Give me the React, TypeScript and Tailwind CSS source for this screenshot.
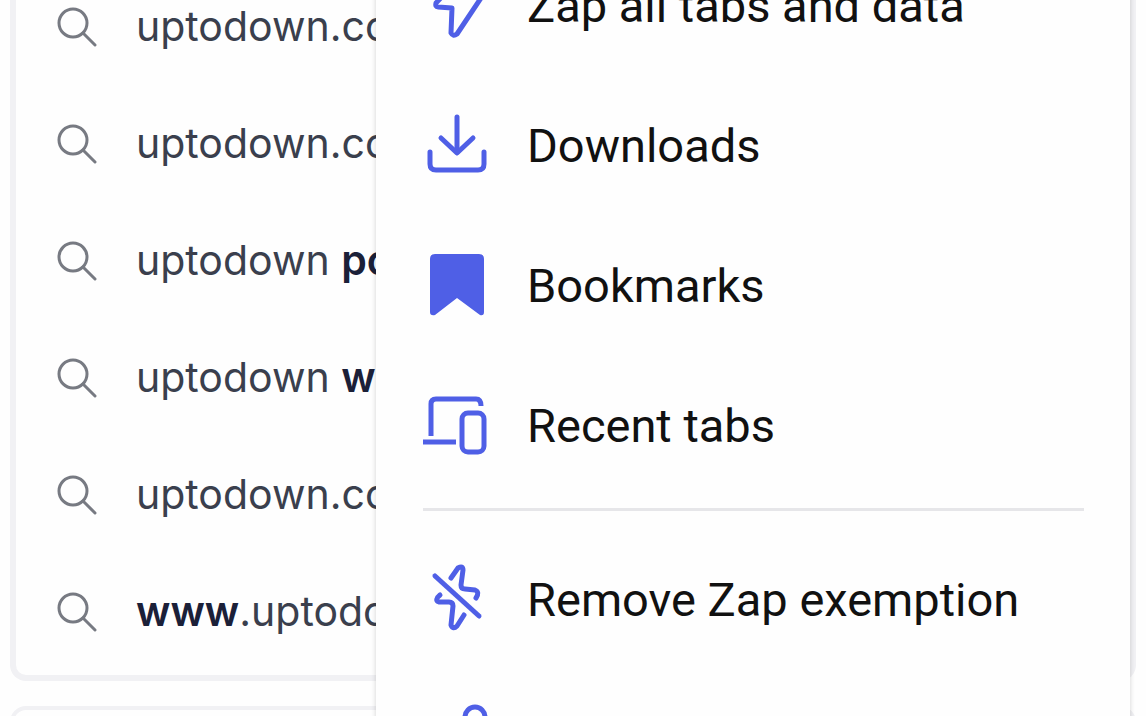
import React from 'react';

interface IconProps {
  className?: string;
}

const SearchIcon: React.FC<IconProps> = ({ className }) => (
  <svg viewBox="0 0 40 40" className={className} fill="none" stroke="currentColor" strokeWidth="3" strokeLinecap="round" aria-hidden="true">
    <circle cx="16" cy="16" r="14" />
    <path d="M26 26 L38 38" />
  </svg>
);

const ZapIcon: React.FC<IconProps> = ({ className }) => (
  <svg viewBox="0 0 72 72" className={className} fill="none" stroke="currentColor" strokeWidth="5" strokeLinejoin="round" strokeLinecap="round" aria-hidden="true">
    <path d="M43 4 L15 34 Q14 38 17 38 L31 39 L30 64 Q32 68 36 65 L60 29 L60 26 L43 26 Z" />
  </svg>
);

const DownloadIcon: React.FC<IconProps> = ({ className }) => (
  <svg viewBox="0 0 72 72" className={className} fill="none" stroke="currentColor" strokeWidth="5" strokeLinejoin="round" strokeLinecap="round" aria-hidden="true">
    <path d="M36 8 L36 43" />
    <path d="M20 29 L36 44 L52 29" />
    <path d="M9 43 L9 55 Q9 61 15 61 L57 61 Q63 61 63 55 L63 43" />
  </svg>
);

const BookmarkIcon: React.FC<IconProps> = ({ className }) => (
  <svg viewBox="0 0 72 72" className={className} fill="currentColor" aria-hidden="true">
    <path d="M14 5 H58 Q63 5 63 10 V63 Q63 67 59 66 L36 49 L14 66 Q9 67 9 63 V10 Q9 5 14 5 Z" />
  </svg>
);

const DevicesIcon: React.FC<IconProps> = ({ className }) => (
  <svg viewBox="0 0 72 72" className={className} fill="none" stroke="currentColor" strokeWidth="5" aria-hidden="true">
    <path d="M10 47 V15 Q10 10 15 10 H55 Q60 10 60 17" />
    <path d="M2 53 H35" />
    <rect x="41" y="24" width="22" height="39" rx="6" />
  </svg>
);

const ZapOffIcon: React.FC<IconProps> = ({ className }) => (
  <svg viewBox="0 0 72 72" className={className} fill="none" stroke="currentColor" strokeWidth="5" strokeLinejoin="round" strokeLinecap="round" aria-hidden="true">
    <path d="M30 15 L37 5 Q42 2 42 7 L40 22 Q40 26 44 26 L54 27 Q59 29 55 35" />
    <path d="M19 32 Q13 37 18 39 L28 39 Q32 39 32 43 L30 62 Q32 67 36 63 L43 52" />
    <path d="M14 13 L58 53" />
  </svg>
);

const ShareIcon: React.FC<IconProps> = ({ className }) => (
  <svg viewBox="0 0 72 72" className={className} fill="none" stroke="currentColor" strokeWidth="5" strokeLinecap="round" aria-hidden="true">
    <circle cx="54" cy="14" r="10" />
    <circle cx="16" cy="36" r="9" />
    <circle cx="54" cy="58" r="9" />
    <path d="M24 31 L45 19 M24 41 L46 53" />
  </svg>
);

interface Suggestion {
  lead?: string;
  text: string;
  tail?: string;
}

const SUGGESTIONS: Suggestion[] = [
  { text: 'uptodown.com' },
  { text: 'uptodown.com' },
  { text: 'uptodown ', tail: 'pc' },
  { text: 'uptodown ', tail: 'windows' },
  { text: 'uptodown.com' },
  { lead: 'www', text: '.uptodown.com' },
];

interface MenuEntry {
  label: string;
  Icon: React.FC<IconProps>;
}

const MAIN_ITEMS: MenuEntry[] = [
  { label: 'Zap all tabs and data', Icon: ZapIcon },
  { label: 'Downloads', Icon: DownloadIcon },
  { label: 'Bookmarks', Icon: BookmarkIcon },
  { label: 'Recent tabs', Icon: DevicesIcon },
];

const PAGE_ITEMS: MenuEntry[] = [
  { label: 'Remove Zap exemption', Icon: ZapOffIcon },
  { label: 'Share', Icon: ShareIcon },
];

const MenuRow: React.FC<MenuEntry> = ({ label, Icon }) => (
  <button type="button" role="menuitem" className="flex h-[140px] w-full items-center gap-[34px] pl-[45px] text-left text-[47px] leading-none text-[#111]">
    <Icon className="size-[72px] shrink-0 text-[#4f5fe6]" />
    <span className="whitespace-nowrap">{label}</span>
  </button>
);

export default function App() {
  return (
    <main className="relative h-screen overflow-hidden bg-[#fefefe]">
      {/* Search suggestions */}
      <section className="-mt-[32px] mx-[10px] overflow-hidden rounded-b-2xl border-x-[6px] border-b-[6px] border-[#f1f1f4] bg-[#fefefe] pb-[5px] font-['Inter',sans-serif]">
        <ul>
          {SUGGESTIONS.map((s, idx) => (
            <li key={idx}>
              <a href="#" className="flex h-[117px] items-center gap-[39px] pl-[41px] text-[41px] leading-none text-[#3a3f4d]">
                <SearchIcon className="size-10 shrink-0 text-[#777a82]" />
                <span className="whitespace-nowrap">
                  {s.lead && <b className="font-semibold text-[#1b2038]">{s.lead}</b>}
                  {s.text}
                  {s.tail && <b className="font-semibold text-[#1b2038]">{s.tail}</b>}
                </span>
              </a>
            </li>
          ))}
        </ul>
      </section>
      <section className="mx-[10px] mt-[25px] h-24 rounded-t-2xl border-4 border-[#f1f1f4]" />

      {/* Browser menu, open over the suggestions */}
      <div role="menu" className="absolute -top-[65px] left-[376px] right-[16px] bg-[#fefefe] font-['Roboto',sans-serif] shadow-[0_0_5px_rgba(0,0,0,0.18)]">
        {MAIN_ITEMS.map((item) => (
          <MenuRow key={item.label} {...item} />
        ))}
        <hr className="mb-[18px] ml-[47px] mr-[46px] mt-[13px] border-t-[3px] border-[#e6e6e9]" />
        {PAGE_ITEMS.map((item) => (
          <MenuRow key={item.label} {...item} />
        ))}
      </div>
    </main>
  );
}
